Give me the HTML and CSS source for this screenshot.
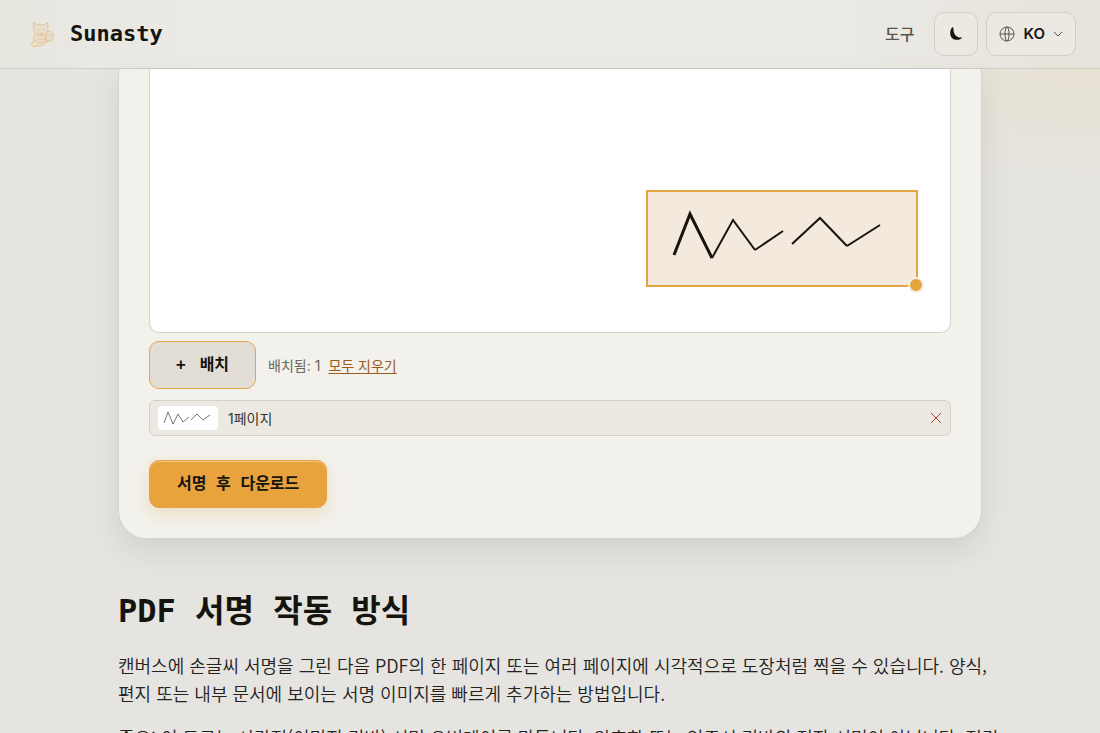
FILE: index.html
```html
<!DOCTYPE html>
<html lang="ko">
<head>
<meta charset="utf-8">
<meta name="viewport" content="width=device-width, initial-scale=1">
<title>Sunasty</title>
<link rel="stylesheet" href="styles.css">
</head>
<body>
<header class="site-header">
  <a class="brand" href="#">
    <svg class="brand-logo" viewBox="0 0 28 28" aria-hidden="true">
      <path class="logo-fill" d="M6 11 5.500 2l4 3q4-1 7 0l3-3 .5 8 0 3q5-2 6 3 0 6-5 6l-3 1q-4 4-11 4-5 0-3-4l3-4Z"/>
      <path d="M6 11 5.500 2l4 3q4-1 7 0l3-3 .5 8q-1 5-6 5.500Q8 16 6 11ZM7 14q-2 5-1 7m11-6 2 4M6 21q4-3 10-2l4 2q-4 5-12 5-6 1-4-3l3-3M19 12q5-2 6 3 1 6-5 6-4-2-2-5 3-3 5 1M9 9l2 1m4 0 2-1m-4 3v1m-3 0 3 1 3-1M8 22q5 2 10-1"/>
    </svg>
    <span class="brand-name">Sunasty</span>
  </a>
  <nav class="site-nav">
    <a class="nav-link" href="#">도구</a>
    <button class="nav-button theme-button" type="button" aria-label="어두운 테마">
      <svg class="moon-icon" viewBox="0 0 14 14" aria-hidden="true"><path d="M3 .5C-.3 5 1 12 6.500 12.700 9.500 13.200 12 12.300 13.300 10.200 9 11.500 4 8 4.500 1.200Q3.800 0 3 .5Z"/></svg>
    </button>
    <button class="nav-button language-button" type="button">
      <svg class="globe-icon" viewBox="0 0 16 16" aria-hidden="true"><circle cx="8" cy="8" r="7"/><ellipse cx="8" cy="8" rx="2" ry="7"/><path d="M1 8h14"/></svg>
      <span>KO</span>
      <svg class="chevron-icon" viewBox="0 0 10 10" aria-hidden="true"><path d="m1 3 4 4 4-4"/></svg>
    </button>
  </nav>
</header>
<main class="page">
  <section class="tool-card">
    <div class="stage">
      <div class="placement">
        <svg class="placement-drawing" viewBox="0 0 268 93" aria-hidden="true">
          <path class="stroke-heavy" d="m26 63 16-41 22 44"/>
          <path class="stroke-medium" d="m64 66 21-38 22 30"/>
          <path class="stroke-light" d="m107 58 28-19"/>
          <path class="stroke-medium" d="m144 52 28-26 27 28"/>
          <path class="stroke-light" d="m199 54 33-21"/>
        </svg>
        <span class="placement-handle"></span>
      </div>
    </div>
    <div class="actions">
      <button class="button button-secondary" type="button"><span>+</span><span>배치</span></button>
      <p class="status"><span>배치됨: 1</span><button class="clear-button" type="button">모두 지우기</button></p>
    </div>
    <ul class="placed-list">
      <li class="placed-item">
        <svg class="thumb" viewBox="0 0 60 24" aria-hidden="true"><path d="m6 17 4-11 5 12 5-10 5 8 6-5m2 3 6-6 6 6 7-5"/></svg>
        <span>1페이지</span>
        <button class="remove-button" type="button" aria-label="삭제"><svg class="remove-icon" viewBox="0 0 12 12" aria-hidden="true"><path d="m1 1 10 10M11 1 1 11"/></svg></button>
      </li>
    </ul>
    <button class="button button-primary" type="button">서명 후 다운로드</button>
  </section>
  <article class="guide">
    <h2 class="guide-title">PDF 서명 작동 방식</h2>
    <p>캔버스에 손글씨 서명을 그린 다음 PDF의 한 페이지 또는 여러 페이지에 시각적으로 도장처럼 찍을 수 있습니다. 양식, 편지 또는 내부 문서에 보이는 서명 이미지를 빠르게 추가하는 방법입니다.</p>
    <p>중요: 이 도구는 시각적(이미지 기반) 서명 오버레이를 만듭니다. 암호화 또는 인증서 기반의 전자 서명이 아닙니다. 적격</p>
  </article>
</main>
</body>
</html>
```
FILE: styles.css
```css
* { box-sizing: border-box; }

body {
  margin: 0;
  height: 100vh;
  overflow: hidden;
  color: #15140f;
  background:
    radial-gradient(ellipse 360px 200px at 100% 0, #e8e0cd, transparent),
    #e5e4e0;
  font-family: Inter, "Noto Sans CJK KR", sans-serif;
  font-size: 16px;
}

button { font: inherit; color: inherit; cursor: pointer; }

svg { display: block; fill: none; stroke: currentColor; }

.site-header {
  display: flex;
  align-items: center;
  justify-content: space-between;
  height: 69px;
  padding: 0 24px 0 28px;
  border-bottom: 1px solid #cfcdc8;
  background: linear-gradient(90deg, #e7e6df, #ebeae7 20%, #ebeae7 75%, #e7e3da);
}

.brand { display: flex; align-items: center; gap: 14px; color: inherit; text-decoration: none; }
.brand-logo { width: 28px; height: 28px; color: #e6c493; }
.logo-fill { fill: #e9dfcf; stroke: none; }
.brand-name { font: bold 22px/32px "DejaVu Sans Mono", monospace; }

.site-nav { display: flex; align-items: center; gap: 8px; }
.nav-link { margin-right: 12px; padding-bottom: 3px; color: #57544c; font-size: 16px; font-weight: 500; text-decoration: none; }

.nav-button {
  display: flex;
  align-items: center;
  justify-content: center;
  gap: 8px;
  height: 44px;
  border: 1px solid #cfcec8;
  border-radius: 10px;
  background: #ece9e3;
}
.theme-button { width: 44px; padding: 0; }
.language-button { padding: 0 12px; font: 600 15px/20px Inter, sans-serif; }
.moon-icon { width: 14px; height: 14px; fill: currentColor; stroke: none; }
.globe-icon { width: 16px; height: 16px; color: #57544c; }
.chevron-icon { width: 10px; height: 10px; color: #57544c; }

.page { max-width: 912px; margin: 0 auto; padding: 0 24px; }

.tool-card {
  padding: 0 30px 30px;
  border: 1px solid #d4d3cc;
  border-top: 0;
  border-radius: 0 0 28px 28px;
  background: #f2f1ec;
  box-shadow: 0 12px 28px rgb(80 75 55 / 12%);
}

.stage {
  position: relative;
  height: 264px;
  border: 1px solid #d2d1cb;
  border-top: 0;
  border-radius: 0 0 10px 10px;
  background: #fff;
}
.placement {
  position: absolute;
  right: 32px;
  bottom: 45px;
  width: 272px;
  height: 97px;
  border: 2px solid #e3a544;
  background: #f3e9dd;
}
.placement-drawing { width: 100%; height: 100%; color: #17130d; }
.stroke-heavy { stroke-width: 3; }
.stroke-medium { stroke-width: 2; }
.stroke-light { stroke-width: 2; }
.placement-handle {
  position: absolute;
  right: -8px;
  bottom: -8px;
  width: 16px;
  height: 16px;
  border: 2px solid #f8efe0;
  border-radius: 50%;
  background: #e5a33c;
}

.actions { display: flex; align-items: center; gap: 12px; margin-top: 8px; }

.button {
  height: 48px;
  padding: 0 26px;
  border: 1px solid #e5a64a;
  border-radius: 10px;
  font: bold 16px/24px "DejaVu Sans Mono", "Noto Sans CJK KR", monospace;
}
.button-secondary { display: flex; align-items: center; gap: 14px; background: #e2ded5; }
.button-primary {
  padding: 0 27px;
  background: #e8a33d;
  box-shadow: inset 0 1px #f3c67c, 0 6px 16px rgb(232 163 61 / 24%);
}

.status { display: flex; align-items: center; gap: 8px; margin: 0; color: #6a675f; font-size: 14px; }
.clear-button {
  padding: 0;
  border: 0;
  background: none;
  color: #9c5a18;
  text-decoration: underline;
  text-underline-offset: 2px;
}

.placed-list { margin: 11px 0 24px; padding: 0; list-style: none; }
.placed-item {
  display: flex;
  align-items: center;
  gap: 10px;
  height: 36px;
  padding: 0 8px;
  border: 1px solid #d2d1ca;
  border-radius: 6px;
  background: #ece9e2;
  color: #34322c;
  font-size: 14px;
}
.thumb { width: 60px; height: 24px; border-radius: 4px; background: #fff; color: #77746f; }
.remove-button { margin-left: auto; padding: 0; border: 0; background: none; color: #bd4237; }
.remove-icon { width: 12px; height: 12px; }

.guide {
  margin-right: -24px;
  padding-top: 48px;
  color: #24221d;
  font-family: "Noto Sans CJK KR", sans-serif;
  font-size: 18px;
  font-weight: 350;
  line-height: 28px;
  word-break: keep-all;
}
.guide p { margin: 0 0 16px; }
.guide .guide-title {
  margin: 0 0 16px;
  color: #15140f;
  font: bold 32px/48px "DejaVu Sans Mono", "Noto Sans CJK KR", monospace;
}
```
